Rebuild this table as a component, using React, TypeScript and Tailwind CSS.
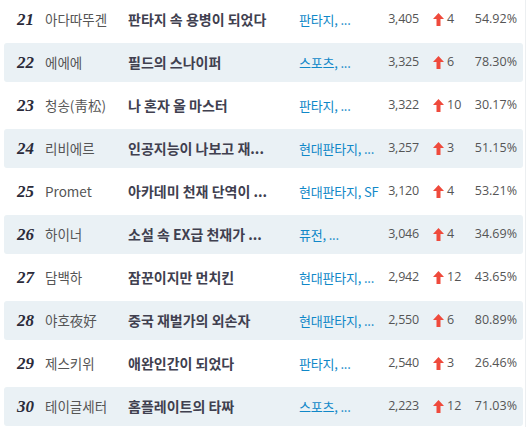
import React from "react";

type Row = {
  rank: number;
  author: string;
  title: string;
  genre: string;
  count: string;
  change: number;
  pct: string;
};

const rows: Row[] = [
  { rank: 21, author: "아다따뚜겐", title: "판타지 속 용병이 되었다", genre: "판타지, ...", count: "3,405", change: 4, pct: "54.92%" },
  { rank: 22, author: "에에에", title: "필드의 스나이퍼", genre: "스포츠, ...", count: "3,325", change: 6, pct: "78.30%" },
  { rank: 23, author: "청송(靑松)", title: "나 혼자 올 마스터", genre: "판타지, ...", count: "3,322", change: 10, pct: "30.17%" },
  { rank: 24, author: "리비에르", title: "인공지능이 나보고 재...", genre: "현대판타지, ...", count: "3,257", change: 3, pct: "51.15%" },
  { rank: 25, author: "Promet", title: "아카데미 천재 단역이 ...", genre: "현대판타지, SF", count: "3,120", change: 4, pct: "53.21%" },
  { rank: 26, author: "하이너", title: "소설 속 EX급 천재가 ...", genre: "퓨전, ...", count: "3,046", change: 4, pct: "34.69%" },
  { rank: 27, author: "담백하", title: "잠꾼이지만 먼치킨", genre: "현대판타지, ...", count: "2,942", change: 12, pct: "43.65%" },
  { rank: 28, author: "야호夜好", title: "중국 재벌가의 외손자", genre: "현대판타지, ...", count: "2,550", change: 6, pct: "80.89%" },
  { rank: 29, author: "제스키위", title: "애완인간이 되었다", genre: "판타지, ...", count: "2,540", change: 3, pct: "26.46%" },
  { rank: 30, author: "테이글세터", title: "홈플레이트의 타짜", genre: "스포츠, ...", count: "2,223", change: 12, pct: "71.03%" },
];

function UpArrow() {
  return (
    <svg width="11" height="13" viewBox="0 0 11 13" className="shrink-0">
      <path d="M5.5 0 L11 6 L7.5 6 L7.5 13 L3.5 13 L3.5 6 L0 6 Z" fill="#ef4a3c" />
    </svg>
  );
}

export default function App() {
  return (
    <div
      className="w-[528px] h-[427px] bg-white overflow-hidden"
      style={{ fontFamily: '"Open Sans", "Noto Sans CJK KR", sans-serif' }}
    >
      <div className="w-[526px] h-[427px] border-r border-[#eceff1] flex flex-col gap-[4px] pl-[4px] pr-[2px]">
        {rows.map((r, i) => (
          <div
            key={r.rank}
            className={`flex items-center h-[39px] shrink-0 rounded-[3px] ${i % 2 === 1 ? "bg-[#eaf1f5]" : "bg-white"}`}
          >
            <div
              className="w-[41px] shrink-0 pl-[13px] text-[17px] font-bold italic text-[#2b2b3a] leading-none"
              style={{ fontFamily: '"Liberation Serif", serif' }}
            >
              {r.rank}
            </div>
            <div
              className="w-[83px] shrink-0 text-[13.5px] text-[#555] whitespace-nowrap"
              style={{ fontFamily: '"Noto Sans CJK KR", "Open Sans", sans-serif' }}
            >
              {r.author}
            </div>
            <div
              className="w-[171px] shrink-0 text-[14px] font-bold text-[#40404f] whitespace-nowrap overflow-hidden"
              style={{ fontFamily: '"Noto Sans CJK KR", sans-serif' }}
            >
              {r.title}
            </div>
            <div
              className="w-[82px] shrink-0 text-[13px] tracking-[-0.2px] text-[#1088c8] whitespace-nowrap"
              style={{ fontFamily: '"Noto Sans CJK KR", "Open Sans", sans-serif' }}
            >
              {r.genre}
            </div>
            <div className="w-[38px] shrink-0 text-right text-[12.5px] text-[#555] tracking-[-0.2px] whitespace-nowrap">{r.count}</div>
            <div className="w-[48px] shrink-0 flex items-center pl-[14px] gap-[3px] text-[12.5px] text-[#555]">
              <UpArrow />
              <span>{r.change}</span>
            </div>
            <div className="w-[50px] shrink-0 text-right text-[12.5px] text-[#555] whitespace-nowrap">
              {r.pct}
            </div>
          </div>
        ))}
      </div>
    </div>
  );
}
